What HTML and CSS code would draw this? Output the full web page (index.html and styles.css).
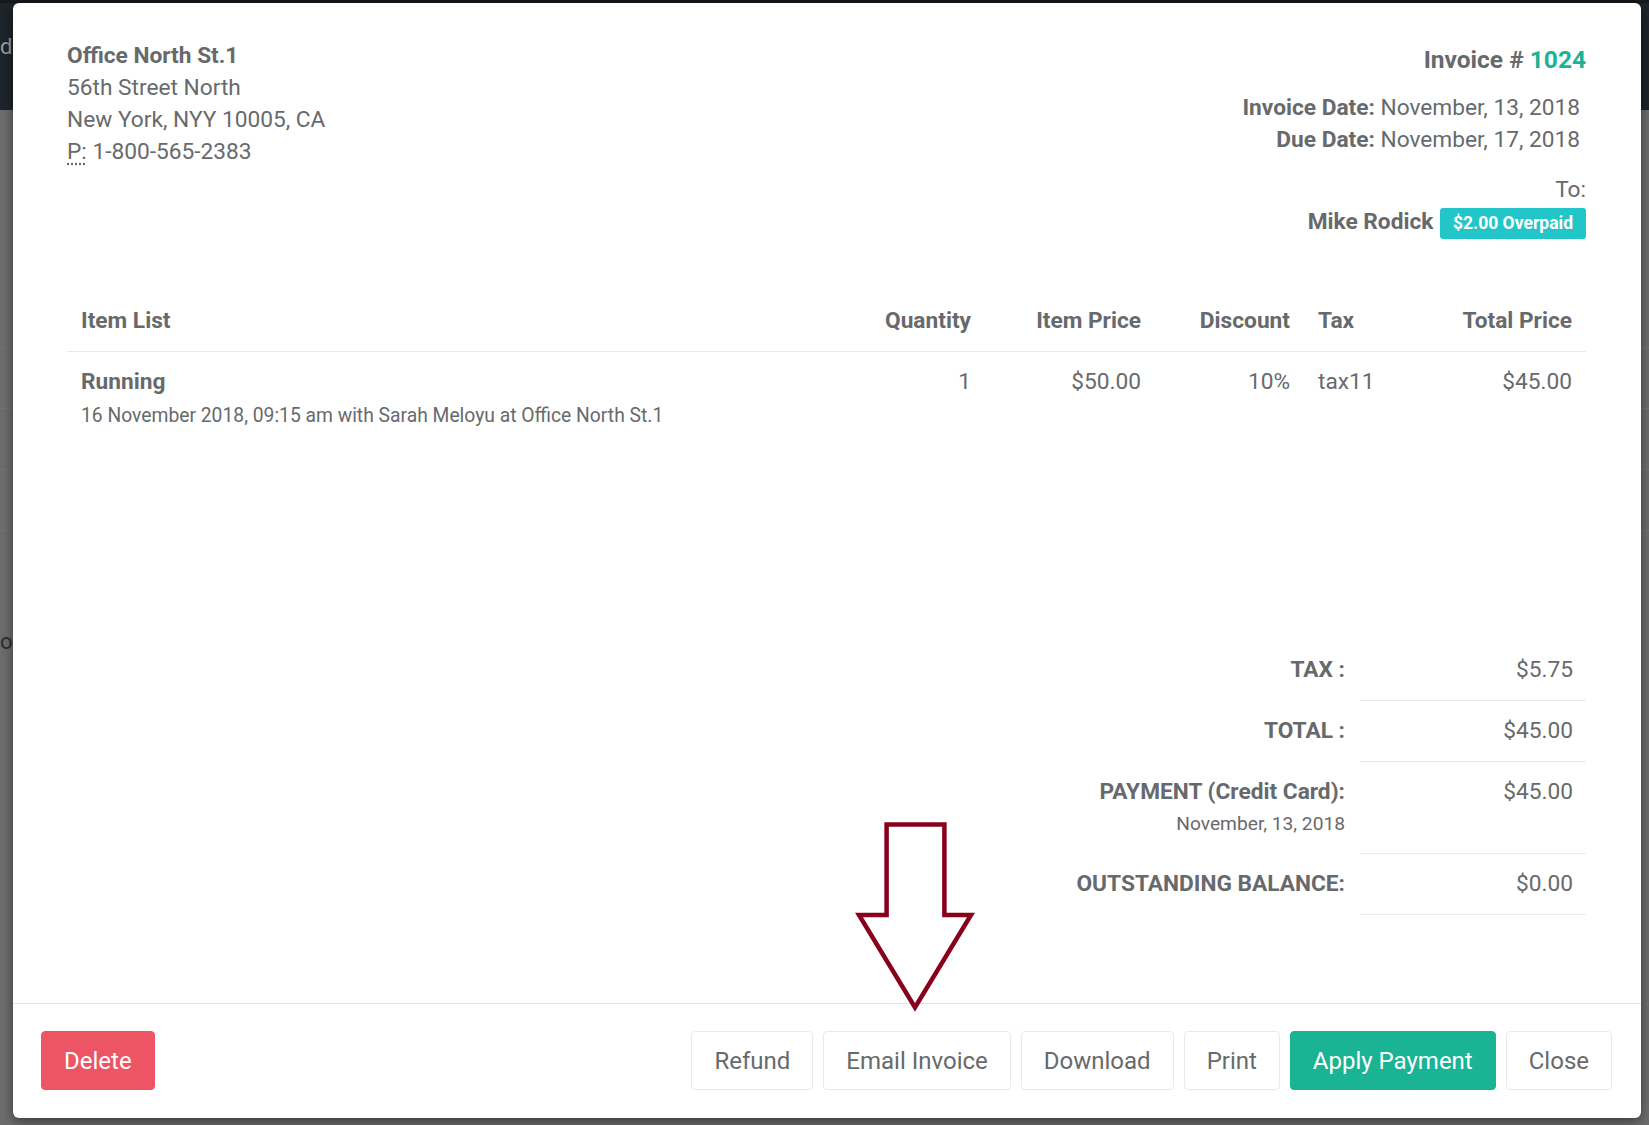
FILE: index.html
```html
<!DOCTYPE html>
<html lang="en">
<head>
<meta charset="utf-8">
<title>Invoice #1024</title>
<link rel="stylesheet" href="styles.css">
</head>
<body>
	<div class="page">
		<div class="navbar">
			<div class="peek peek-light">d</div>
		</div>
		<div class="rows">
			<div class="row"></div>
			<div class="row"></div>
			<div class="row"></div>
			<div class="row"></div>
		</div>
		<div class="peek peek-dark">o</div>
	</div>

	<div class="modal">
		<div class="modal-body">
			<div class="invoice-head">
				<div class="from">
					<div class="from-name">Office North St.1</div>
					<div>56th Street North</div>
					<div>New York, NYY 10005, CA</div>
					<div><abbr title="Phone">P:</abbr> 1-800-565-2383</div>
				</div>
				<div class="to">
					<h4 class="invoice-no">Invoice # <span class="green">1024</span></h4>
					<div class="dates">
						<div><b>Invoice Date:</b> November, 13, 2018</div>
						<div><b>Due Date:</b> November, 17, 2018</div>
					</div>
					<div class="recipient">
						<div>To:</div>
						<div><b>Mike Rodick</b> <span class="badge">$2.00 Overpaid</span></div>
					</div>
				</div>
			</div>

			<table class="items">
				<colgroup>
					<col>
					<col class="c-qty">
					<col class="c-price">
					<col class="c-disc">
					<col class="c-tax">
					<col class="c-total">
				</colgroup>
				<thead>
					<tr>
						<th>Item List</th>
						<th class="r">Quantity</th>
						<th class="r">Item Price</th>
						<th class="r">Discount</th>
						<th>Tax</th>
						<th class="r">Total Price</th>
					</tr>
				</thead>
				<tbody>
					<tr>
						<td>
							<b>Running</b>
							<div class="sub">16 November 2018, 09:15 am with Sarah Meloyu at Office North St.1</div>
						</td>
						<td class="r">1</td>
						<td class="r">$50.00</td>
						<td class="r">10%</td>
						<td>tax11</td>
						<td class="r">$45.00</td>
					</tr>
				</tbody>
			</table>

			<div class="totals">
				<div class="t-label">TAX :</div>
				<div class="t-value">$5.75</div>
				<div class="t-label">TOTAL :</div>
				<div class="t-value">$45.00</div>
				<div class="t-label">PAYMENT (Credit Card):<div class="t-date">November, 13, 2018</div></div>
				<div class="t-value">$45.00</div>
				<div class="t-label">OUTSTANDING BALANCE:</div>
				<div class="t-value">$0.00</div>
			</div>
		</div>

		<div class="modal-footer">
			<button class="btn btn-danger push">Delete</button>
			<button class="btn">Refund</button>
			<button class="btn">Email Invoice</button>
			<button class="btn">Download</button>
			<button class="btn">Print</button>
			<button class="btn btn-primary">Apply Payment</button>
			<button class="btn">Close</button>
		</div>

		<svg class="arrow" width="125" height="192" viewBox="0 0 125 192">
			<polygon points="33.6,3.5 91.4,3.5 91.4,94 118,94 62,186.5 6,94 33.6,94" fill="none" stroke="#88001b" stroke-width="4.5" stroke-linejoin="miter"/>
		</svg>
	</div>
</body>
</html>
```

FILE: styles.css
```css
html, body {
	margin: 0;
	padding: 0;
	height: 100%;
}

body {
	background: #6d6d6d;
	font-family: Roboto, "Liberation Sans", sans-serif;
	color: #676a6c;
	overflow: hidden;
}

.page {
	height: 1125px;
}

.navbar {
	height: 110px;
	background: #1d242b;
	border-top: 3px solid #15191d;
	box-sizing: border-box;
	padding-top: 30px;
}

.peek {
	width: 13px;
	font-size: 22px;
	line-height: 28px;
}

.peek-light {
	color: #9a9ea3;
}

.peek-dark {
	color: #2b2f33;
	margin-top: 37px;
}

.rows {
	padding-top: 237px;
}

.row {
	height: 60px;
	border-top: 1px solid #747474;
}

/* modal */

.modal {
	position: absolute;
	left: 13px;
	top: 3px;
	width: 1628px;
	height: 1115px;
	background: #fff;
	border-radius: 6px;
	box-shadow: 0 3px 12px rgba(0, 0, 0, 0.5);
	display: flex;
	flex-direction: column;
	font-size: 22.7px;
	line-height: 32px;
}

.modal-body {
	flex: 1;
	padding: 37px 55px 0 54px;
}

.invoice-head {
	display: flex;
	justify-content: space-between;
}

.from-name {
	font-weight: 700;
}

abbr {
	text-decoration: underline dotted;
	text-underline-offset: 4px;
}

.to {
	text-align: right;
	padding-top: 4px;
}

.invoice-no {
	margin: 0;
	font-size: 24.5px;
	line-height: 32px;
	font-weight: 700;
}

.green {
	color: #1ab394;
}

.dates {
	margin-top: 16px;
	padding-right: 6px;
}

.recipient {
	margin-top: 18px;
}

.badge {
	display: inline-block;
	vertical-align: top;
	margin-top: 2px;
	margin-left: 1px;
	height: 31px;
	line-height: 31px;
	padding: 0 13px;
	background: #23c6c8;
	color: #fff;
	font-size: 17.5px;
	font-weight: 700;
	border-radius: 3px;
}

/* items */

.items {
	width: 100%;
	margin-top: 52px;
	border-collapse: collapse;
	table-layout: fixed;
}

.c-qty { width: 130px; }
.c-price { width: 170px; }
.c-disc { width: 149px; }
.c-tax { width: 116px; }
.c-total { width: 166px; }

.items th,
.items td {
	padding: 14px;
	text-align: left;
	vertical-align: top;
}

.items th {
	font-weight: 700;
	border-bottom: 1px solid #e7eaec;
}

.items .r {
	text-align: right;
}

.sub {
	font-size: 19.3px;
	line-height: 32px;
	margin-top: 2px;
}

/* totals */

.totals {
	margin-top: 194px;
	display: grid;
	grid-template-columns: auto 226px;
	justify-content: end;
}

.t-label {
	text-align: right;
	font-weight: 700;
	padding: 14px 15px 14px 0;
}

.t-date {
	font-weight: 400;
	font-size: 19.2px;
	line-height: 32px;
}

.t-value {
	text-align: right;
	padding: 14px 13px 14px 0;
	border-bottom: 1px solid #e7eaec;
}

/* footer */

.modal-footer {
	display: flex;
	gap: 10px;
	padding: 27px 29px 28px 28px;
	border-top: 1px solid #e5e5e5;
}

.btn {
	height: 59px;
	padding: 0 22px;
	font-family: Roboto, "Liberation Sans", sans-serif;
	font-size: 24px;
	color: #676a6c;
	background: #fff;
	border: 1px solid #e7eaec;
	border-radius: 4px;
}

.btn-primary {
	background: #1ab394;
	border-color: #1ab394;
	color: #fff;
}

.btn-danger {
	background: #ed5565;
	border-color: #ed5565;
	color: #fff;
}

.push {
	margin-right: auto;
}

.arrow {
	position: absolute;
	left: 840px;
	top: 818px;
	pointer-events: none;
}
```
